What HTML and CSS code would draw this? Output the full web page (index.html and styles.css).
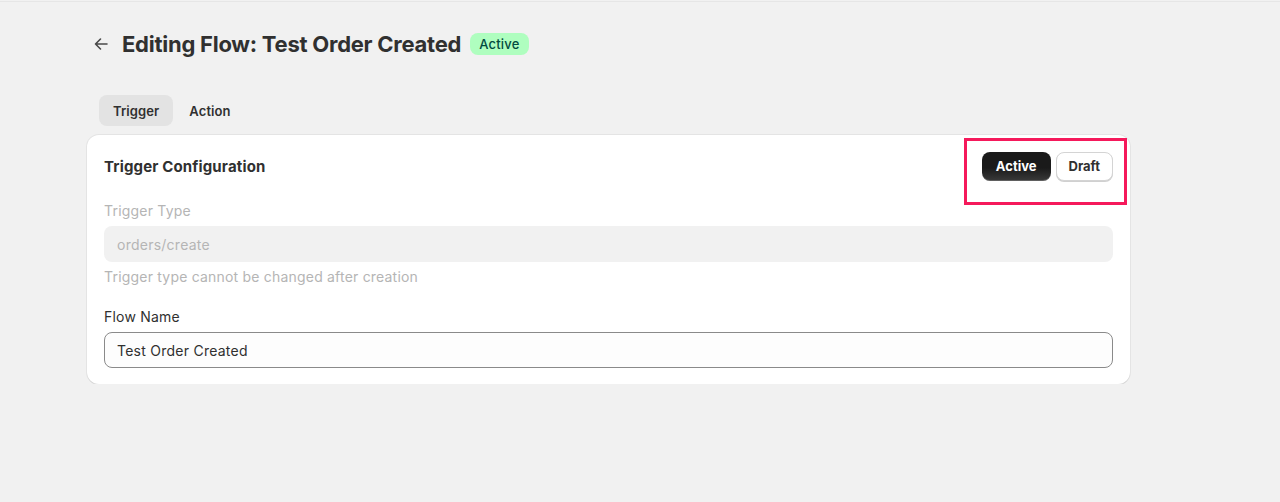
FILE: index.html
```html
<!DOCTYPE html>
<html lang="en">
<head>
<meta charset="UTF-8">
<meta name="viewport" content="width=device-width, initial-scale=1.0">
<title>Editing Flow: Test Order Created</title>
<link rel="stylesheet" href="styles.css">
</head>
<body>
    <div class="topline"></div>
    <div class="page">
        <div class="page-header">
            <button class="back-btn" aria-label="Back">
                <svg width="20" height="20" viewBox="0 0 20 20" fill="none">
                    <path d="M16 10H4.5M9.5 5L4.5 10l5 5" stroke="#4a4a4a" stroke-width="1.6" stroke-linecap="round" stroke-linejoin="round"/>
                </svg>
            </button>
            <h1>Editing Flow: Test Order Created</h1>
            <span class="badge">Active</span>
        </div>

        <div class="tabs">
            <button class="tab selected">Trigger</button>
            <button class="tab">Action</button>
        </div>

        <div class="card">
            <div class="card-header">
                <h2>Trigger Configuration</h2>
                <div class="status-group">
                    <button class="btn btn-primary">Active</button>
                    <button class="btn">Draft</button>
                </div>
            </div>

            <div class="field disabled">
                <label for="trigger-type">Trigger Type</label>
                <input type="text" id="trigger-type" value="orders/create" disabled>
                <div class="help">Trigger type cannot be changed after creation</div>
            </div>

            <div class="field last">
                <label for="flow-name">Flow Name</label>
                <input type="text" id="flow-name" value="Test Order Created">
            </div>

            <div class="highlight"></div>
        </div>
    </div>
</body>
</html>
```

FILE: styles.css
```css
body {
    font-family: Inter, "Noto Sans", sans-serif;
    font-size: 14px;
    letter-spacing: 0.2px;
    color: #303030;
    background-color: #f1f1f1;
    margin: 0;
}

.topline {
    height: 1px;
    margin-top: 1px;
    background-color: #e6e6e6;
}

.page {
    width: 1043px;
    padding: 18px 0 0 87px;
}

.page-header {
    display: flex;
    align-items: center;
    height: 48px;
}

.back-btn {
    width: 28px;
    height: 28px;
    padding: 0;
    border: none;
    background: none;
    display: flex;
    align-items: center;
    justify-content: center;
    cursor: pointer;
}

h1 {
    font-size: 22px;
    font-weight: 700;
    letter-spacing: -0.25px;
    margin: 0 9px 0 7px;
    color: #303030;
}

.badge {
    background-color: #affebf;
    color: #014b40;
    font-size: 13px;
    font-weight: 500;
    padding: 2px 9px;
    border-radius: 8px;
    line-height: 18px;
}

.tabs {
    display: flex;
    gap: 2px;
    padding: 27px 0 0 12px;
    margin-bottom: 9px;
}

.tab {
    font-family: inherit;
    font-size: 13px;
    font-weight: 600;
    letter-spacing: 0.1px;
    color: #303030;
    background: none;
    border: none;
    border-radius: 8px;
    height: 31px;
    padding: 0 14px;
    cursor: pointer;
}

.tab.selected {
    background-color: #e3e3e3;
}

.card {
    position: relative;
    background-color: #fff;
    border-radius: 12px;
    padding: 16px 17px;
    box-shadow: 0 1px 0 rgba(26, 26, 26, 0.07), 0 0 0 1px rgba(26, 26, 26, 0.06);
}

.card-header {
    display: flex;
    align-items: center;
    justify-content: space-between;
    height: 30px;
    margin-bottom: 20px;
}

h2 {
    font-size: 15px;
    font-weight: 650;
    letter-spacing: 0.15px;
    margin: 0;
    color: #303030;
}

.status-group {
    display: flex;
    gap: 5px;
}

.btn {
    font-family: inherit;
    font-size: 13px;
    font-weight: 650;
    letter-spacing: 0;
    color: #303030;
    height: 29px;
    padding: 0 12px;
    border-radius: 8px;
    border: 1px solid #d4d4d4;
    background-color: #fff;
    box-shadow: 0 1px 0 #d0d0d0;
    cursor: pointer;
}

.btn-primary {
    color: #fff;
    border: none;
    padding: 0 14px;
    background: linear-gradient(#1a1a1a, #1a1a1a 55%, #3a3a3a);
    box-shadow: inset 0 -1px 0 rgba(255, 255, 255, 0.2);
}

.field {
    margin-bottom: 20px;
}

.field.last {
    margin-bottom: 0;
}

label {
    display: block;
    line-height: 20px;
    margin-bottom: 5px;
}

input[type="text"] {
    display: block;
    width: 100%;
    box-sizing: border-box;
    height: 36px;
    padding: 0 12px;
    font-family: inherit;
    font-size: 14px;
    letter-spacing: 0.25px;
    color: #303030;
    border: 1px solid #8a8a8a;
    border-radius: 8px;
    background-color: #fdfdfd;
}

.field.disabled label,
.field.disabled .help {
    color: #b5b5b5;
}

.field.disabled input {
    border-color: transparent;
    background-color: #f1f1f1;
    color: #b5b5b5;
}

.help {
    line-height: 20px;
    margin-top: 5px;
}

/* outline drawn around the status toggle */
.highlight {
    position: absolute;
    top: 3px;
    right: 3px;
    width: 157px;
    height: 61px;
    border: 3px solid #f5195b;
    pointer-events: none;
}
```
